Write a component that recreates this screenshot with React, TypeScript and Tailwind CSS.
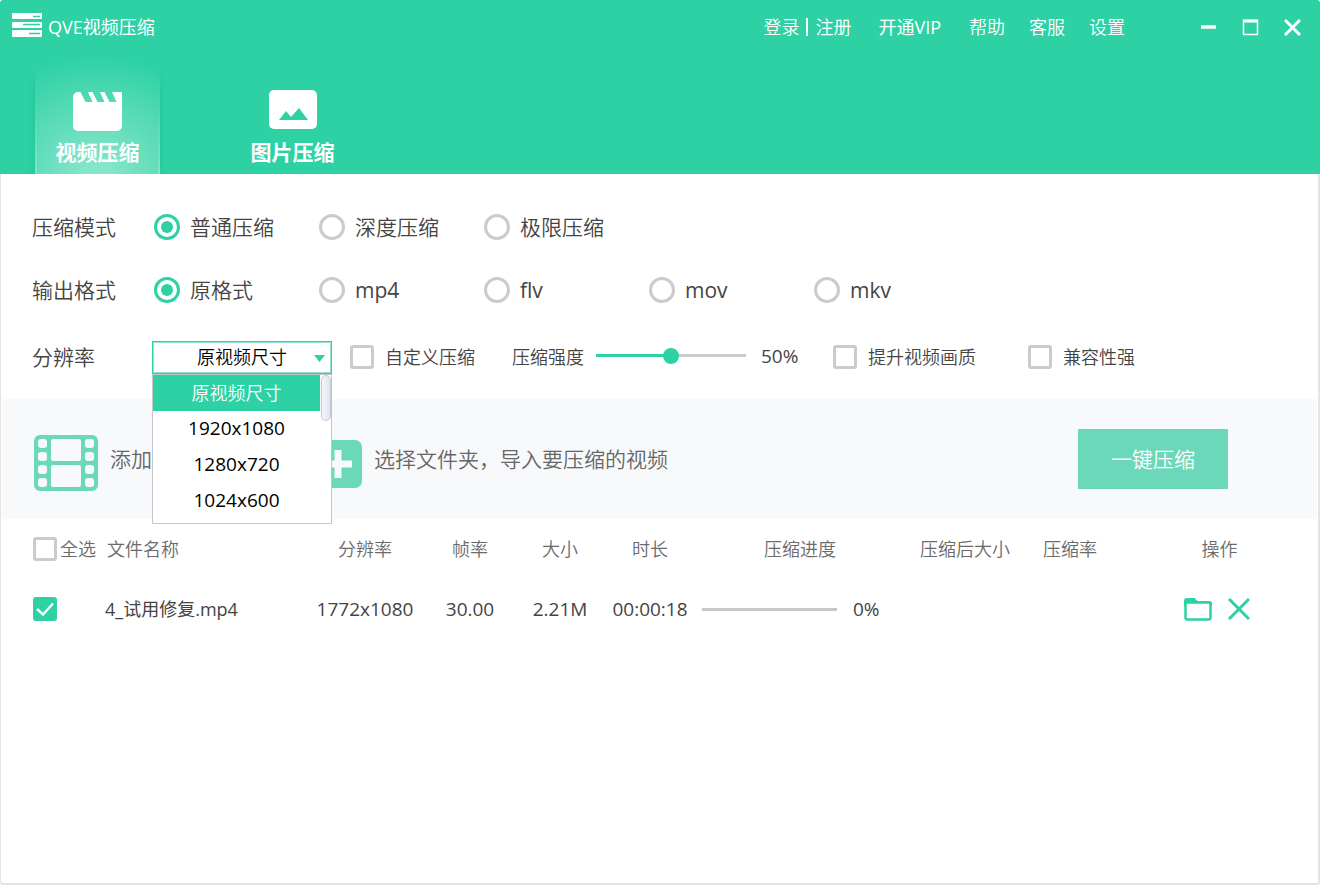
import React, { useState } from 'react'

const fontStack = "font-['Open_Sans','Noto_Sans_CJK_SC',sans-serif]"

const modes = ['普通压缩', '深度压缩', '极限压缩']
const formats = ['原格式', 'mp4', 'flv', 'mov', 'mkv']
const sizes = ['原视频尺寸', '1920x1080', '1280x720', '1024x600']

const Logo = () => (
  <svg width="30" height="25" viewBox="0 0 30 25" fill="none" className="mb-1" aria-hidden="true">
    <rect x="0" y="0" width="30" height="6" rx="1" fill="#fff" />
    <rect x="0" y="9" width="30" height="6" rx="1" fill="#fff" />
    <rect x="0" y="17" width="30" height="7" rx="1" fill="#fff" />
    <path d="M21 3.500h7M11 11.500h17M17 20.500h11" stroke="#2dd1a4" strokeWidth="1.500" />
  </svg>
)

const ClapperIcon = () => (
  <svg width="49" height="39" viewBox="0 0 49 39" aria-hidden="true">
    <path
      fill="#fff"
      d="M5 0H7.500L12.500 10H19.500L15 0H19.500L24.500 10H31.500L27 0H31.500L36.500 10H43.500L39 0H49V34a5 5 0 0 1-5 5H5a5 5 0 0 1-5-5V5A5 5 0 0 1 5 0Z"
    />
  </svg>
)

const PictureIcon = () => (
  <svg width="48" height="39" viewBox="0 0 48 39" aria-hidden="true">
    <rect width="48" height="39" rx="5" fill="#fff" />
    <path d="M10 30L17 21L22 27L30 18L39 30Z" fill="#2dd1a4" />
  </svg>
)

const FilmIcon = () => (
  <svg width="64" height="56" viewBox="0 0 64 56" className="mt-2" aria-hidden="true">
    <rect width="64" height="56" rx="6" fill="#6bd9b9" />
    <g fill="#f8f9fb">
      <rect x="17" y="4" width="30" height="22" rx="2" />
      <rect x="17" y="30" width="30" height="22" rx="2" />
      {[4, 17, 30, 43].map((y) => (
        <React.Fragment key={y}>
          <rect x="4" y={y} width="9" height="9" rx="3" />
          <rect x="51" y={y} width="9" height="9" rx="3" />
        </React.Fragment>
      ))}
    </g>
  </svg>
)

const PlusIcon = () => (
  <svg width="48" height="48" viewBox="0 0 48 48" className="mt-2.5" aria-hidden="true">
    <rect width="48" height="48" rx="7" fill="#6bd9b9" />
    <path d="M24 10V38M10 24H38" stroke="#f8f9fb" strokeWidth="7" />
  </svg>
)

const FolderIcon = () => (
  <svg width="28" height="23" viewBox="0 0 28 23" fill="none" aria-hidden="true">
    <path d="M3 0H10.500L13.500 3H25a3 3 0 0 1 3 3V8H0V3A3 3 0 0 1 3 0Z" fill="#2dd1a4" />
    <rect x="1.500" y="4.500" width="25" height="17" rx="2" fill="#fff" stroke="#2dd1a4" strokeWidth="2.500" />
  </svg>
)

type RadioProps = { name: string; label: string; checked: boolean; onChange: () => void; className?: string }

const Radio = ({ name, label, checked, onChange, className = '' }: RadioProps) => (
  <label className={`flex w-[165px] items-center gap-2.5 ${className}`}>
    <input
      type="radio"
      name={name}
      checked={checked}
      onChange={onChange}
      className="grid size-[26px] shrink-0 appearance-none place-items-center rounded-full border-3 border-[#cbcbcb] before:size-3 before:rounded-full checked:border-[#2dd1a4] checked:before:bg-[#2dd1a4]"
    />
    {label}
  </label>
)

type CheckProps = { label?: string; ariaLabel?: string; defaultChecked?: boolean; className?: string }

const Check = ({ label, ariaLabel, defaultChecked, className = 'gap-[11px]' }: CheckProps) => (
  <label className={`flex items-center whitespace-nowrap ${className}`}>
    <span className="grid size-6 shrink-0">
      <input
        type="checkbox"
        aria-label={ariaLabel}
        defaultChecked={defaultChecked}
        className="peer col-start-1 row-start-1 size-6 appearance-none rounded-[3px] border-3 border-[#cbcbcb] bg-white checked:border-[#2dd1a4] checked:bg-[#2dd1a4]"
      />
      <svg
        viewBox="0 0 24 24"
        className="pointer-events-none col-start-1 row-start-1 size-6 opacity-0 peer-checked:opacity-100"
        aria-hidden="true"
      >
        <path d="M4 12L10 17.500L20 6.500" fill="none" stroke="#fff" strokeWidth="2.500" />
      </svg>
    </span>
    {label}
  </label>
)

const App = () => {
  const [mode, setMode] = useState(modes[0])
  const [format, setFormat] = useState(formats[0])
  const [size, setSize] = useState(sizes[0])
  const [open, setOpen] = useState(true)
  const [level, setLevel] = useState(50)

  return (
    <div className={`flex min-h-screen flex-col bg-white text-lg leading-6 font-[350] text-[#444] ${fontStack}`}>
      {/* Header */}
      <header className="overflow-hidden rounded-t-[3px] bg-[#2dd1a4] text-white">
        <div className="flex h-[54px] items-center pr-[19px] pl-3">
          <Logo />
          <h1 className="ml-1.5 font-normal">QVE视频压缩</h1>
          <nav className="ml-auto flex items-center">
            <a href="#">登录</a>
            <span className="mx-[7px] h-[18px] w-0.5 bg-white"></span>
            <a href="#">注册</a>
            <a href="#" className="ml-[27px] font-normal">开通VIP</a>
            <a href="#" className="ml-7">帮助</a>
            <a href="#" className="ml-6">客服</a>
            <a href="#" className="ml-6">设置</a>
          </nav>
          <div className="ml-[75px] flex items-center gap-[25px]">
            <button aria-label="最小化">
              <svg width="17" height="17" viewBox="0 0 17 17"><path d="M1 8H16" stroke="#fff" strokeWidth="3.500" /></svg>
            </button>
            <button aria-label="最大化">
              <svg width="17" height="17" viewBox="0 0 17 17" fill="none">
                <rect x="1.500" y="1.500" width="14" height="14" stroke="#fff" strokeWidth="1.500" />
                <path d="M1 2H16" stroke="#fff" strokeWidth="3" />
              </svg>
            </button>
            <button aria-label="关闭">
              <svg width="17" height="17" viewBox="0 0 17 17"><path d="M1 1L16 16M16 1L1 16" stroke="#fff" strokeWidth="3" /></svg>
            </button>
          </div>
        </div>

        {/* Tabs */}
        <div className="flex gap-[70px] pl-[35px] text-[21px] font-bold">
          <button className="flex h-[120px] w-[125px] flex-col items-center border-x-2 bg-radial-[110%_100%_at_50%_100%] from-[#84e5c9] from-10% to-[#2dd1a4] pt-[38px] shadow-[0_24px_8px_-2px_#1fb98e] [border-image:linear-gradient(#2dd1a4_15%,#84e5c9)_2]">
            <ClapperIcon />
            <span className="mt-[9px]">视频压缩</span>
          </button>
          <button className="flex h-[120px] w-[125px] flex-col items-center pt-9">
            <PictureIcon />
            <span className="mt-[11px]">图片压缩</span>
          </button>
        </div>
      </header>

      <main className="grow rounded-b-[3px] border-r-2 border-b-2 border-l border-[#e4e4e4]">
        {/* Settings */}
        <section className="pt-[35px] pb-6 pl-[31px] text-[21px]">
          <div className="flex h-9 items-center">
            <span className="w-[122px]">压缩模式</span>
            {modes.map((m) => (
              <Radio key={m} name="mode" label={m} checked={mode === m} onChange={() => setMode(m)} />
            ))}
          </div>
          <div className="mt-[27px] flex h-9 items-center">
            <span className="w-[122px]">输出格式</span>
            {formats.map((f, i) => (
              <Radio
                key={f}
                name="format"
                label={f}
                checked={format === f}
                onChange={() => setFormat(f)}
                className={i > 0 ? 'font-normal' : ''}
              />
            ))}
          </div>
          <div className="mt-[31px] flex h-9 items-center">
            <label htmlFor="size" className="w-[120px]">分辨率</label>
            <div className="relative w-[180px] text-lg text-black">
              <select
                id="size"
                value={size}
                onChange={(e) => setSize(e.target.value)}
                onMouseDown={(e) => {
                  e.preventDefault()
                  setOpen(!open)
                }}
                className="block h-[33px] w-full appearance-none border border-[#2dd1a4] bg-white text-center inset-ring inset-ring-[#8fe6cc] outline-none"
              >
                {sizes.map((s) => (
                  <option key={s}>{s}</option>
                ))}
              </select>
              <svg width="11" height="7" viewBox="0 0 11 7" className="pointer-events-none absolute top-[14px] right-[7px]">
                <path d="M0 0H11L5.500 7Z" fill="#2dd1a4" />
              </svg>
              {open && (
                <div className="absolute top-full left-0 z-10 flex w-full border border-[#c3c5d0] bg-white pb-1">
                  <ul role="listbox" aria-label="分辨率" className="grow">
                    {sizes.map((s) => (
                      <li
                        key={s}
                        role="option"
                        aria-selected={size === s}
                        onClick={() => {
                          setSize(s)
                          setOpen(false)
                        }}
                        className={`flex h-9 items-center justify-center ${size === s ? 'bg-[#2dd1a4] text-white' : 'text-[19px] font-normal'}`}
                      >
                        {s}
                      </li>
                    ))}
                  </ul>
                  <div className="ml-px h-[46px] w-2.5 rounded-full border border-[#c3cad6] bg-linear-to-r from-[#f4f7fa] to-[#dfe5ec]"></div>
                </div>
              )}
            </div>
            <div className="ml-[18px] flex items-center text-lg">
              <Check label="自定义压缩" />
              <label htmlFor="level" className="ml-[37px] whitespace-nowrap">压缩强度</label>
              <input
                id="level"
                type="range"
                value={level}
                onChange={(e) => setLevel(Number(e.target.value))}
                style={{
                  background: `linear-gradient(to right, #2dd1a4 ${level}%, #cbcbcb ${level}%)`,
                }}
                className="mb-0.5 ml-3 h-[3px] w-[150px] appearance-none [&::-webkit-slider-thumb]:size-4 [&::-webkit-slider-thumb]:appearance-none [&::-webkit-slider-thumb]:rounded-full [&::-webkit-slider-thumb]:bg-[#2dd1a4]"
              />
              <output htmlFor="level" className="ml-[15px] w-[72px] text-[19px] font-normal">{level}%</output>
              <Check label="提升视频画质" />
              <Check label="兼容性强" className="ml-[52px] gap-[11px]" />
            </div>
          </div>
        </section>

        {/* Import bar */}
        <section className="mx-px flex h-[120px] items-center bg-[#f8f9fb] pr-[89px] pl-8 text-[21px] text-[#666]">
          <button className="flex w-[280px] items-center gap-3">
            <FilmIcon />
            添加视频
          </button>
          <button className="flex items-center gap-3">
            <PlusIcon />
            选择文件夹，导入要压缩的视频
          </button>
          <button className="ml-auto h-[60px] w-[150px] bg-[#6bd9b9] text-white">一键压缩</button>
        </section>

        {/* File list */}
        <table className="w-full table-fixed text-center">
          <colgroup>
            <col className="w-[104px]" />
            <col />
            <col className="w-[120px]" />
            <col className="w-[90px]" />
            <col className="w-[90px]" />
            <col className="w-[90px]" />
            <col className="w-[210px]" />
            <col className="w-[120px]" />
            <col className="w-[90px]" />
            <col className="w-[203px]" />
          </colgroup>
          <thead className="text-[#6b6b6b]">
            <tr className="h-[60px] [&>th]:font-[350]">
              <th className="pl-8"><Check label="全选" className="gap-[3px]" /></th>
              <th className="pl-0.5 text-left">文件名称</th>
              <th>分辨率</th>
              <th>帧率</th>
              <th>大小</th>
              <th>时长</th>
              <th>压缩进度</th>
              <th>压缩后大小</th>
              <th>压缩率</th>
              <th className="pl-1.5">操作</th>
            </tr>
          </thead>
          <tbody>
            <tr className="h-[60px] text-[19px] font-normal">
              <td className="pl-8"><Check ariaLabel="4_试用修复.mp4" defaultChecked /></td>
              <td className="text-left text-lg">4_试用修复.mp4</td>
              <td>1772x1080</td>
              <td>30.00</td>
              <td>2.21M</td>
              <td>00:00:18</td>
              <td>
                <div className="flex items-center gap-4 pl-[7px]">
                  <div role="progressbar" aria-label="压缩进度" aria-valuenow={0} className="h-[3px] w-[135px] bg-[#c8c8c8]"></div>
                  0%
                </div>
              </td>
              <td></td>
              <td></td>
              <td>
                <div className="flex items-center justify-center gap-4">
                  <button aria-label="打开文件夹"><FolderIcon /></button>
                  <button aria-label="删除">
                    <svg width="22" height="22" viewBox="0 0 22 22">
                      <path d="M1 1L21 21M21 1L1 21" stroke="#2dd1a4" strokeWidth="3" />
                    </svg>
                  </button>
                </div>
              </td>
            </tr>
          </tbody>
        </table>
      </main>
    </div>
  )
}

export default App
